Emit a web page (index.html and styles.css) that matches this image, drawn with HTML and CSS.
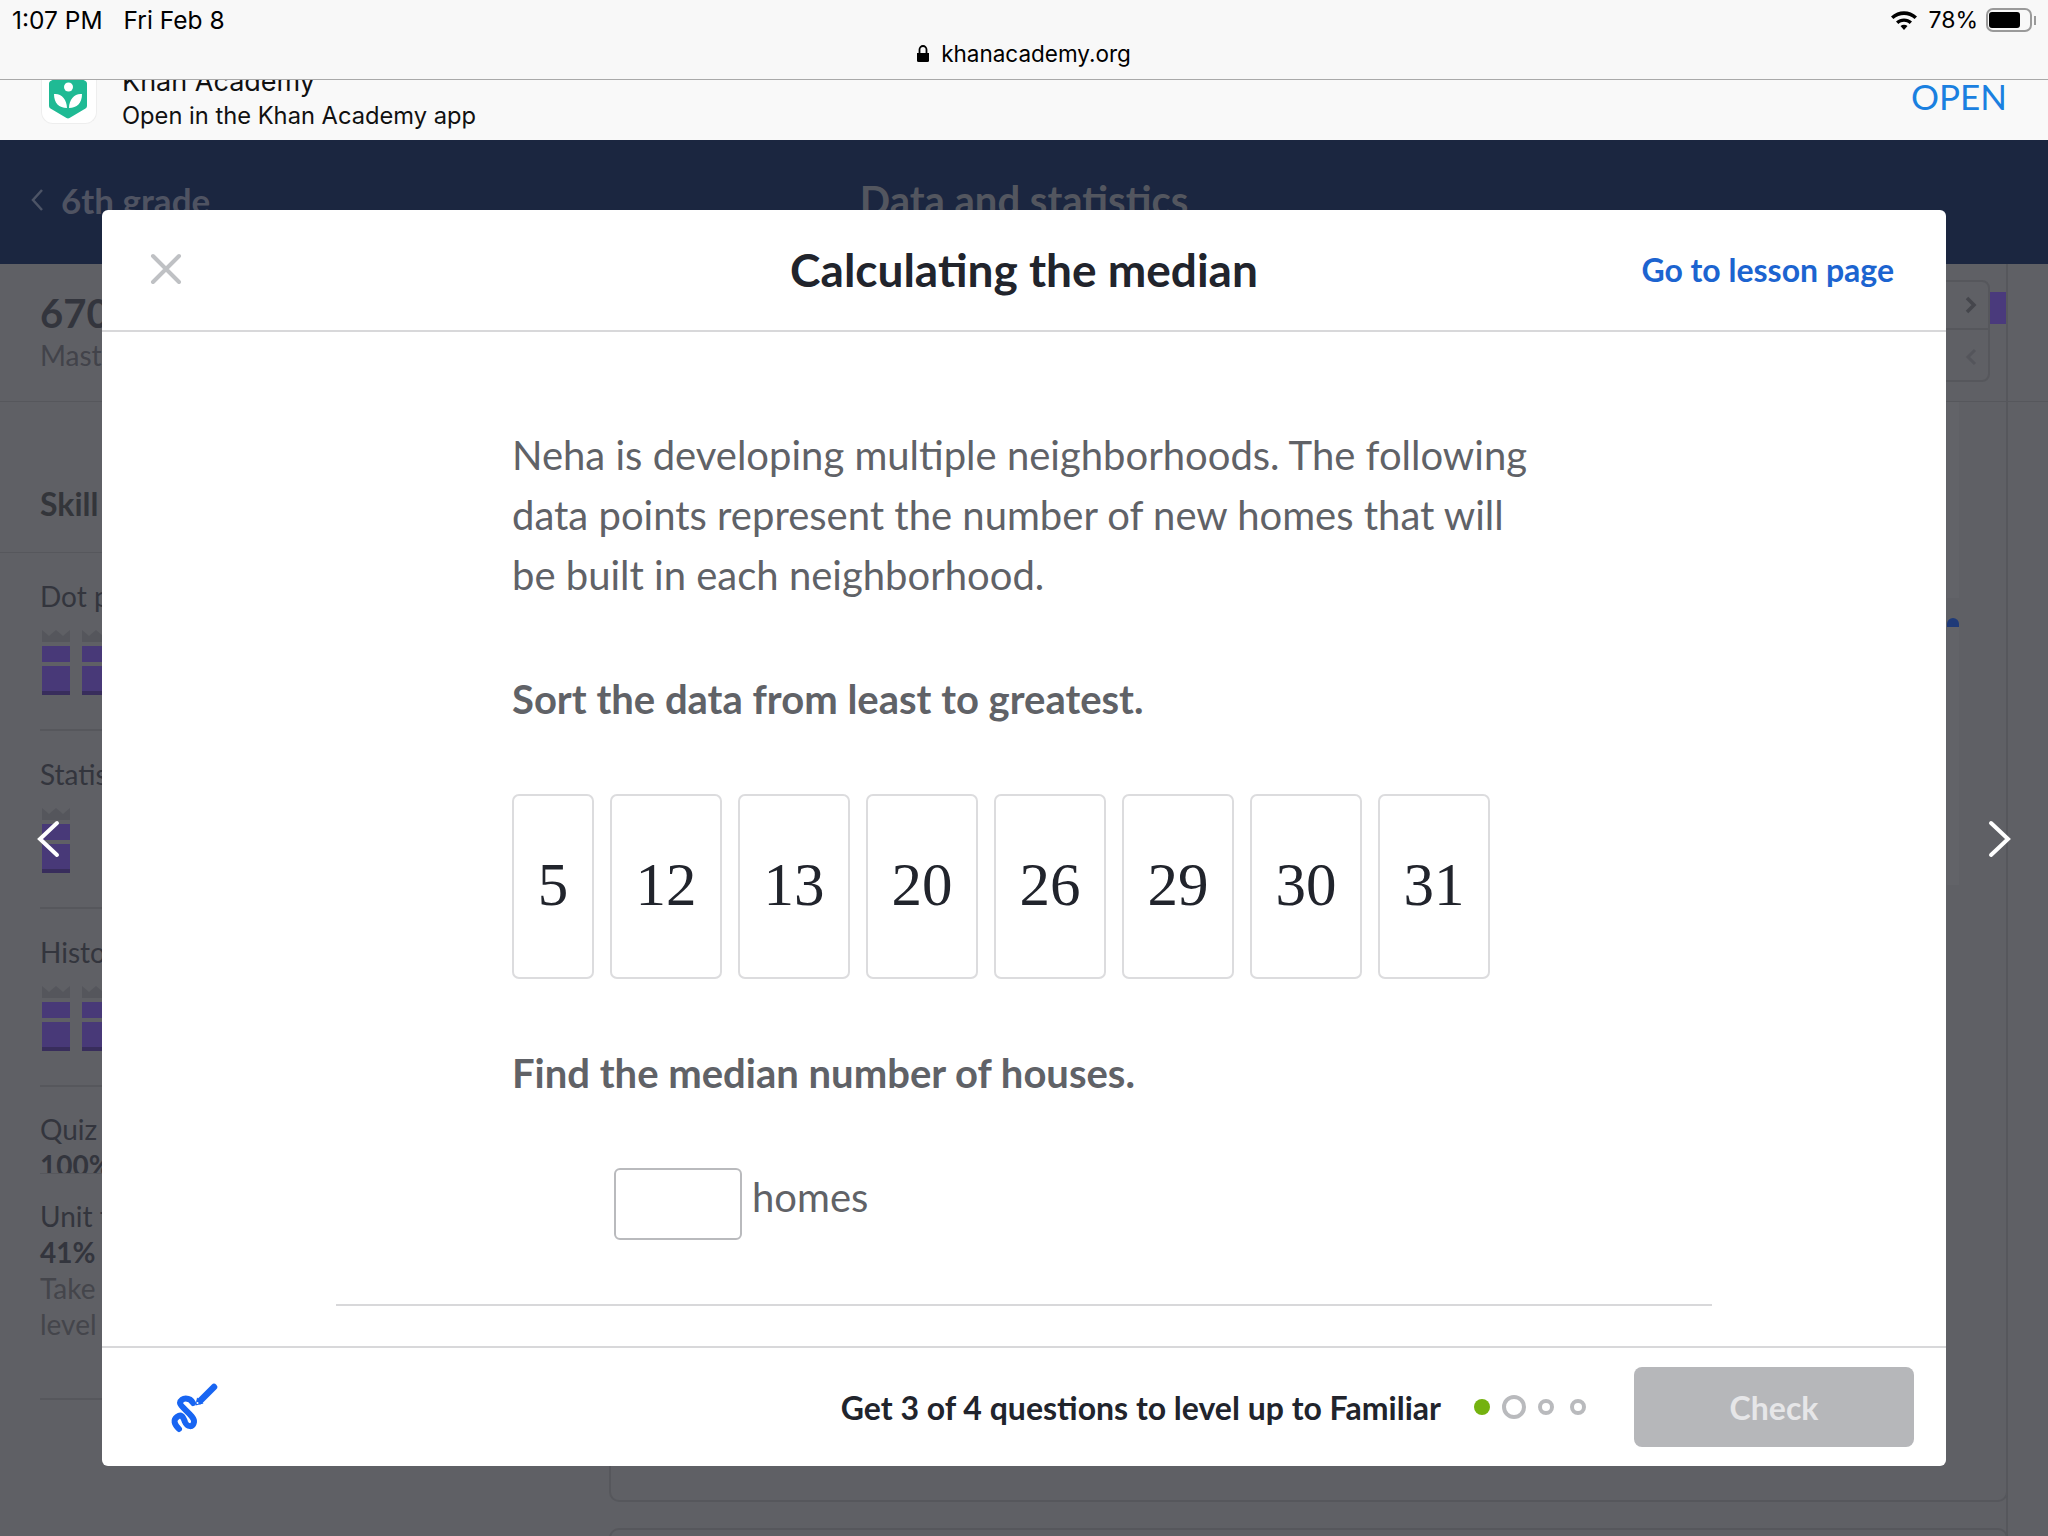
FILE: index.html
```html
<!DOCTYPE html>
<html lang="en">
<head>
	<meta charset="UTF-8">
	<title>Calculating the median</title>
	<link rel="stylesheet" href="styles.css">
</head>
<body>
<div id="screen">
	<div class="status">
		<div class="status-row">
			<span class="time">1:07 PM</span>
			<span>Fri Feb 8</span>
			<span class="status-right">
				<svg class="wifi" width="28" height="22" viewBox="0 0 28 22"><path d="M1 7.500C8.500.5 19.500.5 27 7.500L24.600 10C18.500 4.500 9.500 4.500 3.400 10Z"/><path d="M6 12.500C10.500 8.500 17.500 8.500 22 12.500L19.700 15C16.300 12 11.700 12 8.300 15Z"/><path d="M10.500 17C12.500 15.300 15.500 15.300 17.500 17L14 21Z"/></svg>
				<span>78%</span>
				<span class="battery"><span class="battery-fill"></span></span>
				<span class="battery-tip"></span>
			</span>
		</div>
		<div class="url">
			<svg width="12" height="17" viewBox="0 0 12 17"><path d="M0 8h12v7.500a1.500 1.500 0 0 1-1.500 1.500h-9A1.500 1.500 0 0 1 0 15.500Z"/><path d="M2.500 8V4.500a3.500 3.500 0 0 1 7 0V8" fill="none" stroke="#000" stroke-width="1.800"/></svg>
			<span>khanacademy.org</span>
		</div>
	</div>

	<div class="banner">
		<div class="app-icon">
			<svg width="38" height="47" viewBox="0 0 38 47"><path d="M17.500.8a3 3 0 0 1 3 0L36.500 9a3 3 0 0 1 1.500 2.500V34a3 3 0 0 1-1.500 2.500L20.500 46a3 3 0 0 1-3 0L1.500 36.500A3 3 0 0 1 0 34V11.500A3 3 0 0 1 1.500 9Z" fill="#1fba94"/><circle cx="19.500" cy="15" r="4.500" fill="#fff"/><path d="M5 22C12 21 18 27 18 36 10 36 5 31 5 22ZM33 22C26 21 20 27 20 36 28 36 33 31 33 22Z" fill="#fff"/></svg>
		</div>
		<div class="app-text">
			<div class="app-name">Khan Academy</div>
			<div>Open in the Khan Academy app</div>
		</div>
		<a class="open" href="#">OPEN</a>
	</div>

	<div class="nav">
		<div class="nav-back">
			<svg width="14" height="24" viewBox="0 0 14 24"><path d="M12 2 3 12l9 10" fill="none" stroke="#4d5466" stroke-width="2.500"/></svg>
			<span>6th grade</span>
		</div>
		<div class="nav-title">Data and statistics</div>
	</div>

	<div class="page">
		<div class="side">
			<div class="side-top">
				<div class="mastery-num">670</div>
				<div class="muted">Mastery points</div>
			</div>
			<div class="skill-head">Skill summary</div>
			<div class="skill">
				<div class="skill-name">Dot plots</div>
				<div class="blocks">
					<span class="block"><span class="crown"></span></span>
					<span class="block"><span class="crown"></span></span>
				</div>
			</div>
			<div class="skill">
				<div class="skill-name">Statistical questions</div>
				<div class="blocks">
					<span class="block"><span class="crown"></span></span>
				</div>
			</div>
			<div class="skill">
				<div class="skill-name">Histograms</div>
				<div class="blocks">
					<span class="block"><span class="crown"></span></span>
					<span class="block"><span class="crown"></span></span>
				</div>
			</div>
			<div class="quiz">
				<div>Quiz 1</div>
				<div class="bold">100%</div>
			</div>
			<div class="unit">
				<div>Unit test</div>
				<div class="bold">41%</div>
				<div class="muted">Take the test to</div>
				<div class="muted">level up</div>
			</div>
		</div>
		<div class="main">
			<div class="main-line"></div>
			<div class="main-top">
				<div class="pager">
					<span class="pager-btn"><svg width="14" height="20" viewBox="0 0 14 20"><path d="M3 3l7 7-7 7" fill="none" stroke="#45464c" stroke-width="3.500"/></svg></span>
					<span class="pager-btn"><svg width="14" height="20" viewBox="0 0 14 20"><path d="M11 3l-7 7 7 7" fill="none" stroke="#54555b" stroke-width="3"/></svg></span>
				</div>
				<span class="swatch"></span>
			</div>
			<div class="track">
				<span class="track-a"></span>
				<span class="track-arc"></span>
				<span class="track-b"></span>
			</div>
			<div class="card"></div>
			<div class="card second"></div>
		</div>
	</div>

	<svg class="arrow arrow-prev" width="24" height="38" viewBox="0 0 24 38"><path d="M21 3 4 19l17 16" fill="none" stroke="#fff" stroke-width="4" stroke-linecap="round"/></svg>
	<svg class="arrow arrow-next" width="24" height="38" viewBox="0 0 24 38"><path d="M3 3l17 16L3 35" fill="none" stroke="#fff" stroke-width="4" stroke-linecap="round"/></svg>

	<div class="modal">
		<div class="modal-head">
			<svg class="close" width="32" height="32" viewBox="0 0 32 32"><path d="M3 3l26 26M29 3 3 29" stroke="#bfc1c4" stroke-width="4" stroke-linecap="round"/></svg>
			<h1>Calculating the median</h1>
			<a class="lesson" href="#">Go to lesson page</a>
		</div>
		<div class="modal-body">
			<div class="question">
				<p class="intro">Neha is developing multiple neighborhoods. The following data points represent the number of new homes that will be built in each neighborhood.</p>
				<p class="ask">Sort the data from least to greatest.</p>
				<div class="tiles">
					<div class="tile tile-one">5</div>
					<div class="tile">12</div>
					<div class="tile">13</div>
					<div class="tile">20</div>
					<div class="tile">26</div>
					<div class="tile">29</div>
					<div class="tile">30</div>
					<div class="tile">31</div>
				</div>
				<p class="ask ask-two">Find the median number of houses.</p>
				<div class="answer">
					<input class="answer-box" type="text">
					<span class="unit-word">homes</span>
				</div>
			</div>
			<div class="body-rule"></div>
		</div>
		<div class="modal-foot">
			<svg class="scribble" width="90" height="70" viewBox="0 0 90 70"><path d="M43 33C40 27 31 27 30 33 30 37 45 46 44 52 43 58 37 57 35 52 33 46 31 44 27 47 23 50 24 54 29 59" fill="none" stroke="#1865f2" stroke-width="6" stroke-linecap="round" stroke-linejoin="round"/><path d="M50 31 64 17" stroke="#1865f2" stroke-width="6.500" stroke-linecap="round"/><path d="M45.500 35.500 47 27.500 53.500 33.500Z" fill="#1865f2"/><circle cx="47.500" cy="33" r="1" fill="#fff"/></svg>
			<span class="level-text">Get 3 of 4 questions to level up to Familiar</span>
			<div class="dots">
				<span class="dot dot-done"></span>
				<span class="dot dot-now"></span>
				<span class="dot"></span>
				<span class="dot"></span>
			</div>
			<button class="check" type="button">Check</button>
		</div>
	</div>
</div>
</body>
</html>
```

FILE: styles.css
```css
*
{
    margin: 0;
    padding: 0;
    box-sizing: border-box;
}
body
{
    width: 2048px;
    height: 1536px;
    overflow: hidden;
    font-family: "Lato", "Liberation Sans", sans-serif;
    background: #5f6065;
}
a
{
    text-decoration: none;
}
#screen
{
    position: relative;
    display: flex;
    flex-direction: column;
    width: 2048px;
    height: 1536px;
    overflow: hidden;
}

/* browser bar */
.status
{
    position: relative;
    z-index: 3;
    flex: none;
    height: 80px;
    padding: 0 12px;
    font-family: "Inter", "Liberation Sans", sans-serif;
    font-size: 24.500px;
    color: #000;
    background: #f8f8f8;
    border-bottom: 1px solid #a9a9a9;
}
.status-row
{
    display: flex;
    align-items: center;
    height: 40px;
}
.time
{
    margin-right: 21px;
}
.status-right
{
    display: flex;
    align-items: center;
    margin-left: auto;
    font-size: 23px;
}
.wifi
{
    margin-right: 10px;
}
.battery
{
    display: block;
    width: 46px;
    height: 24px;
    margin-left: 8px;
    padding: 2px 1px;
    border: 2px solid #9a9a9a;
    border-radius: 7px;
}
.battery-fill
{
    display: block;
    width: 31px;
    height: 100%;
    background: #000;
    border-radius: 3px;
}
.battery-tip
{
    width: 2px;
    height: 9px;
    margin: 0 0 0 2px;
    background: #9a9a9a;
}
.url
{
    display: flex;
    align-items: center;
    justify-content: center;
    gap: 12px;
    height: 26px;
    font-size: 22.500px;
}

/* app banner */
.banner
{
    display: flex;
    flex: none;
    height: 60px;
    padding: 0 41px;
    font-family: "Inter", "Liberation Sans", sans-serif;
    font-size: 23.700px;
    color: #111;
    background: #f9f9f9;
}
.app-icon
{
    flex: none;
    width: 56px;
    height: 44px;
    padding-left: 7px;
    overflow: hidden;
    background: #fff;
    border: 1px solid #eee;
    border-top: 0;
    border-radius: 0 0 12px 12px;
}
.app-icon svg
{
    display: block;
    margin-top: -8px;
}
.app-text
{
    margin-left: 25px;
    line-height: 34px;
}
.app-name
{
    margin-top: -15px;
    font-size: 27px;
}
.open
{
    margin-left: auto;
    margin-top: 1px;
    font-family: "Lato", sans-serif;
    font-size: 35px;
    line-height: 30px;
    color: #1a80e0;
}

/* nav behind the modal */
.nav
{
    position: relative;
    display: flex;
    flex: none;
    align-items: center;
    justify-content: center;
    height: 124px;
    padding-bottom: 4px;
    font-size: 35px;
    font-weight: 700;
    color: #4f5362;
    background: #1b2640;
}
.nav-back
{
    position: absolute;
    left: 30px;
    display: flex;
    align-items: center;
    gap: 17px;
}
.nav-title
{
    font-size: 40px;
    color: #53565f;
}

/* page behind the modal */
.page
{
    display: flex;
    flex: 1;
    position: relative;
    min-height: 0;
    color: #36373c;
}
.side
{
    flex: none;
    width: 560px;
    padding-left: 40px;
    font-size: 28px;
    color: #33353d;
}
.side-top
{
    height: 137px;
    padding-top: 24px;
}
.mastery-num
{
    font-size: 40px;
    font-weight: 700;
    line-height: 50px;
}
.muted
{
    color: #42434a;
}
.skill-head
{
    height: 152px;
    margin-left: -40px;
    padding: 82px 0 0 40px;
    font-size: 32px;
    font-weight: 700;
    color: #33353a;
    border-top: 1px solid #56575c;
    border-bottom: 1px solid #56575c;
}
.skill
{
    height: 178px;
    padding-top: 23px;
    border-bottom: 2px solid #56575c;
}
.skill-name
{
    line-height: 40px;
}
.blocks
{
    display: flex;
    gap: 12px;
    padding: 30px 0 0 2px;
}
.block
{
    position: relative;
    display: block;
    width: 28px;
    height: 49px;
    background: linear-gradient(#483978 0 16px, #5f6065 16px 20px, #483978 20px 45px, #382d5c 45px);
}
.crown
{
    position: absolute;
    top: -16px;
    left: 0;
    width: 28px;
    height: 12px;
    background: #55565c;
    clip-path: polygon(0 0, 25% 50%, 50% 0, 75% 50%, 100% 0, 100% 100%, 0 100%);
}
.quiz
{
    height: 87px;
    padding-top: 24px;
    overflow: hidden;
    line-height: 36px;
    border-bottom: 1px solid #56575c;
}
.bold
{
    font-weight: 700;
}
.unit
{
    height: 226px;
    padding-top: 24px;
    line-height: 36px;
    border-bottom: 2px solid #56575c;
}
.unit .muted
{
    color: #44454b;
}
.main
{
    position: relative;
    flex: 1;
    border-right: 2px solid #56575c;
    margin-right: 40px;
}
.main-line
{
    position: absolute;
    top: 137px;
    right: -42px;
    left: 0;
    height: 1px;
    background: #56575c;
}
.main-top
{
    position: absolute;
    top: 16px;
    right: 0;
    display: flex;
}
.pager
{
    display: flex;
    flex-direction: column;
    width: 120px;
    height: 102px;
    border: 2px solid #56575c;
    border-radius: 8px;
}
.pager-btn
{
    display: flex;
    flex: 1;
    align-items: center;
    justify-content: flex-end;
    padding-right: 10px;
}
.pager-btn:first-child
{
    border-bottom: 2px solid #56575c;
}
.pager-btn + .pager-btn
{
    padding-top: 4px;
}
.swatch
{
    width: 16px;
    height: 32px;
    margin-top: 12px;
    background: #4a3a7c;
}
.track
{
    position: absolute;
    top: 138px;
    right: 47px;
    display: flex;
    flex-direction: column;
    width: 12px;
}
.track-a
{
    height: 196px;
    background: #626368;
}
.track-arc
{
    height: 9px;
    margin-top: 20px;
    background: #1f3a78;
    border-radius: 12px 12px 0 0;
}
.track-b
{
    height: 258px;
    background: #626368;
}
.card
{
    position: absolute;
    top: 600px;
    left: 49px;
    right: -2px;
    height: 638px;
    border: 2px solid #56575c;
    border-top: 0;
    border-radius: 0 0 10px 10px;
}
.card.second
{
    top: 1264px;
    height: 100px;
    border-top: 2px solid #56575c;
    border-radius: 10px 10px 0 0;
}
.arrow
{
    position: absolute;
    top: 820px;
}
.arrow-prev
{
    left: 36px;
}
.arrow-next
{
    left: 1988px;
}

/* modal */
.modal
{
    position: absolute;
    z-index: 2;
    top: 210px;
    left: 102px;
    display: flex;
    flex-direction: column;
    width: 1844px;
    height: 1256px;
    background: #fff;
    border-radius: 6px;
}
.modal-head
{
    position: relative;
    display: flex;
    flex: none;
    align-items: center;
    justify-content: center;
    height: 122px;
    padding-bottom: 2px;
    border-bottom: 2px solid #d8d8da;
}
.close
{
    position: absolute;
    top: 43px;
    left: 48px;
}
h1
{
    font-size: 46px;
    font-weight: 700;
    color: #21242c;
}
.lesson
{
    position: absolute;
    right: 52px;
    font-size: 32px;
    font-weight: 700;
    color: #1c64d0;
}
.modal-body
{
    flex: 1;
    padding: 0 234px;
}
.question
{
    height: 972px;
    padding: 93px 0 0 176px;
    color: #606267;
}
.intro
{
    width: 1030px;
    font-size: 40px;
    line-height: 60px;
}
.ask
{
    margin-top: 64px;
    font-size: 40px;
    font-weight: 700;
    line-height: 60px;
}
.tiles
{
    display: flex;
    gap: 16px;
    margin-top: 65px;
}
.tile
{
    display: flex;
    align-items: center;
    justify-content: center;
    width: 112px;
    height: 185px;
    padding-bottom: 4px;
    font-family: "Liberation Serif", serif;
    font-size: 61px;
    color: #21242c;
    border: 2px solid #dcdcde;
    border-radius: 7px;
}
.tile-one
{
    width: 82px;
}
.ask-two
{
    margin-top: 64px;
}
.answer
{
    display: flex;
    align-items: flex-start;
    gap: 10px;
    margin: 65px 0 0 102px;
    font-size: 40px;
    line-height: 54px;
}
.unit-word
{
    padding-top: 2px;
}
.answer-box
{
    width: 128px;
    height: 72px;
    background: #fff;
    border: 2px solid #b9babd;
    border-radius: 6px;
}
.body-rule
{
    height: 2px;
    background: #d8d8da;
}
.modal-foot
{
    display: flex;
    flex: none;
    align-items: center;
    height: 120px;
    padding: 0 32px 0 48px;
    border-top: 2px solid #d8d8da;
}
.scribble
{
    margin-bottom: 4px;
}
.level-text
{
    margin-left: auto;
    font-size: 32px;
    font-weight: 700;
    color: #21242c;
}
.dots
{
    display: flex;
    align-items: center;
    margin: 0 48px 0 33px;
    gap: 16px;
}
.dot
{
    width: 16px;
    height: 16px;
    border: 4px solid #b9babd;
    border-radius: 50%;
}
.dot-done
{
    background: #74b20f;
    border: 0;
}
.dot-now
{
    width: 24px;
    height: 24px;
    margin: 0 -4px;
}
.check
{
    width: 280px;
    height: 80px;
    font-family: "Lato", sans-serif;
    font-size: 32px;
    font-weight: 700;
    color: #e6e6e8;
    background: #b6b7ba;
    border: 0;
    border-radius: 8px;
}
```
